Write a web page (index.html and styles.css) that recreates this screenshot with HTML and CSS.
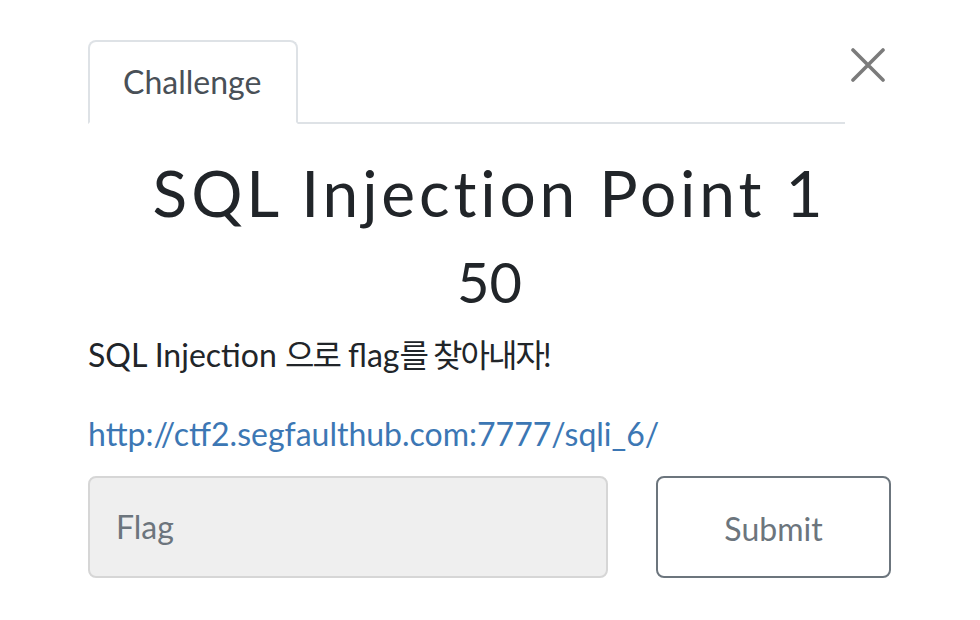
FILE: index.html
```html
<!DOCTYPE html>
<html lang="ko">
<head>
<meta charset="utf-8">
<link rel="stylesheet" href="styles.css">
</head>
<body>
<div class="modal-body">
  <div class="top-row">
    <ul class="nav-tabs">
      <li class="tab">Challenge</li>
    </ul>
    <button class="close" aria-label="Close">
      <svg width="34" height="34" viewBox="0 0 34 34"><path d="M2 2 L32 32 M32 2 L2 32" stroke="#7b7b7b" stroke-width="3.6" stroke-linecap="round" fill="none"/></svg>
    </button>
  </div>
  <h2 class="title">SQL Injection Point 1</h2>
  <h3 class="value">50</h3>
  <p class="desc">SQL Injection <span class="ko">으로</span> flag<span class="ko">를 찾아내자</span>!</p>
  <p class="link-line"><a href="#">http://ctf2.segfaulthub.com:7777/sqli_6/</a></p>
  <div class="form-row">
    <input class="flag-input" type="text" placeholder="Flag">
    <button class="submit">Submit</button>
  </div>
</div>
</body>
</html>
```

FILE: styles.css
```css
html, body {
  margin: 0;
  padding: 0;
  background: #ffffff;
}
body {
  font-family: Lato, "Noto Sans CJK KR", sans-serif;
  color: #212529;
}
.modal-body {
  width: 803px;
  margin-left: 88px;
  padding-top: 40px;
}
.top-row {
  display: flex;
  align-items: flex-start;
}
.nav-tabs {
  flex: 1;
  display: flex;
  list-style: none;
  margin: 0;
  padding: 0;
  border-bottom: 2px solid #dee2e6;
}
.tab {
  margin-bottom: -2px;
  border: 2px solid #dee2e6;
  border-bottom-color: #ffffff;
  border-radius: 8px 8px 0 0;
  padding: 16px 35px 16px 33px;
  font-size: 32px;
  line-height: 48px;
  color: #495057;
  background: #fff;
}
.close {
  width: 46px;
  background: none;
  border: 0;
  padding: 8px 0 0 6px;
  margin: 0;
  display: flex;
}
.title {
  margin: 31px 0 16px;
  text-align: center;
  font-size: 64px;
  font-weight: 400;
  line-height: 1.2;
  letter-spacing: 3.85px;
}
.value {
  margin: 0 0 16px;
  text-align: center;
  font-size: 56px;
  font-weight: 400;
  line-height: 1.2;
}
.desc {
  margin: 0 0 31px;
  font-size: 32px;
  line-height: 48px;
}
.ko {
  letter-spacing: -2px;
}
.link-line {
  margin: 0;
  font-size: 32px;
  line-height: 48px;
}
.link-line a {
  color: #3c77b4;
  text-decoration: none;
}
.form-row {
  display: flex;
  gap: 48px;
  margin-top: 18px;
}
.flag-input {
  width: 520px;
  height: 102px;
  box-sizing: border-box;
  border: 2px solid #d6d6d6;
  border-radius: 8px;
  background: #efefef;
  padding: 0 26px;
  font-family: Lato, sans-serif;
  font-size: 32px;
  color: #495057;
}
.flag-input::placeholder {
  color: #6c757d;
}
.submit {
  width: 235px;
  height: 102px;
  box-sizing: border-box;
  border: 2px solid #6c757d;
  border-radius: 8px;
  background: #fff;
  font-family: Lato, sans-serif;
  font-size: 32px;
  color: #6c757d;
  padding-top: 4px;
}
```
